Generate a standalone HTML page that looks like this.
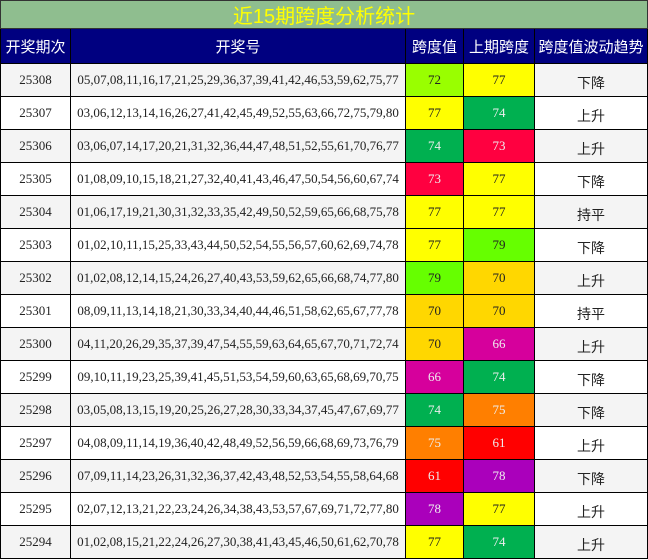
<!DOCTYPE html><html><head><meta charset="utf-8"><style>
body{margin:0;width:648px;height:560px;overflow:hidden;background:#fff;font-family:"Liberation Serif","Noto Serif CJK SC",serif}
.c{position:absolute;box-sizing:border-box;display:flex;align-items:center;justify-content:center;border-right:1px solid #000;border-bottom:1px solid #000;font-size:13px;color:#222}
.t{position:absolute;left:0;top:0;width:648px;height:29px;background:#8fbe8f;border:1px solid #333;box-sizing:border-box;color:#ffff00;font-size:20px;display:flex;align-items:center;justify-content:center;font-family:"Liberation Sans","Noto Sans CJK SC",sans-serif}
.h{background:#000080;color:#fff;font-size:15px;font-family:"Liberation Sans","Noto Sans CJK SC",sans-serif}
.z{font-size:14px;font-family:"Liberation Sans","Noto Sans CJK SC",sans-serif;padding-top:5px}
.l{color:#eee}
</style></head><body>
<div class="t">近15期跨度分析统计</div>
<div id="g"></div>
<script>
var X=[0,71,406,464,535,648];
var rows=[["25308","05,07,08,11,16,17,21,25,29,36,37,39,41,42,46,53,59,62,75,77",72,77,"下降"],
["25307","03,06,12,13,14,16,26,27,41,42,45,49,52,55,63,66,72,75,79,80",77,74,"上升"],
["25306","03,06,07,14,17,20,21,31,32,36,44,47,48,51,52,55,61,70,76,77",74,73,"上升"],
["25305","01,08,09,10,15,18,21,27,32,40,41,43,46,47,50,54,56,60,67,74",73,77,"下降"],
["25304","01,06,17,19,21,30,31,32,33,35,42,49,50,52,59,65,66,68,75,78",77,77,"持平"],
["25303","01,02,10,11,15,25,33,43,44,50,52,54,55,56,57,60,62,69,74,78",77,79,"下降"],
["25302","01,02,08,12,14,15,24,26,27,40,43,53,59,62,65,66,68,74,77,80",79,70,"上升"],
["25301","08,09,11,13,14,18,21,30,33,34,40,44,46,51,58,62,65,67,77,78",70,70,"持平"],
["25300","04,11,20,26,29,35,37,39,47,54,55,59,63,64,65,67,70,71,72,74",70,66,"上升"],
["25299","09,10,11,19,23,25,39,41,45,51,53,54,59,60,63,65,68,69,70,75",66,74,"下降"],
["25298","03,05,08,13,15,19,20,25,26,27,28,30,33,34,37,45,47,67,69,77",74,75,"下降"],
["25297","04,08,09,11,14,19,36,40,42,48,49,52,56,59,66,68,69,73,76,79",75,61,"上升"],
["25296","07,09,11,14,23,26,31,32,36,37,42,43,48,52,53,54,55,58,64,68",61,78,"下降"],
["25295","02,07,12,13,21,22,23,24,26,34,38,43,53,57,67,69,71,72,77,80",78,77,"上升"],
["25294","01,02,08,15,21,22,24,26,27,30,38,41,43,45,46,50,61,62,70,78",77,74,"上升"]];
var col={72:"#99ff00",77:"#ffff00",74:"#00b050",73:"#ff0040",79:"#66ff00",70:"#ffd700",66:"#d6009c",75:"#ff7f00",61:"#ff0000",78:"#aa00bb"};
var dark={74:1,73:1,66:1,75:1,61:1,78:1};
var h="";
function cell(i,y,hh,txt,cls,st){h+='<div class="c '+(cls||"")+'" style="left:'+X[i]+'px;top:'+y+'px;width:'+(X[i+1]-X[i])+'px;height:'+hh+'px;'+(i==0?'border-left:1px solid #000;':'')+(st||"")+'">'+txt+'</div>';}
var hd=["开奖期次","开奖号","跨度值","上期跨度","跨度值波动趋势"];
for(var i=0;i<5;i++)cell(i,29,35,hd[i],"h");
rows.forEach(function(r,k){var y=64+k*33,bg=k%2==0?"#f4f4f4":"#fff";
cell(0,y,33,r[0],"","background:"+bg);
cell(1,y,33,r[1],"","background:"+bg);
cell(2,y,33,r[2],dark[r[2]]?"l":"","background:"+col[r[2]]);
cell(3,y,33,r[3],dark[r[3]]?"l":"","background:"+col[r[3]]);
cell(4,y,33,r[4],"z","background:"+bg);});
document.getElementById("g").innerHTML=h;
</script>
</body></html>
